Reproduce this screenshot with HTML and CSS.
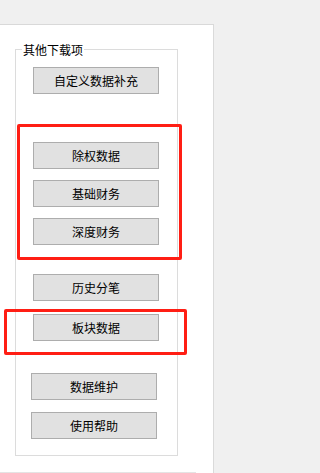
FILE: index.html
```html
<!DOCTYPE html>
<html lang="zh-CN">
<head>
<meta charset="utf-8">
<title>其他下载项</title>
<link rel="stylesheet" href="styles.css">
</head>
<body>
<div class="panel">
  <div class="group">
    <div class="legend">其他下载项</div>
    <button class="btn btn-first">自定义数据补充</button>
    <div class="mark mark-a">
      <button class="btn">除权数据</button>
      <button class="btn gap11">基础财务</button>
      <button class="btn gap11">深度财务</button>
    </div>
    <button class="btn btn-hist">历史分笔</button>
    <div class="mark mark-b">
      <button class="btn">板块数据</button>
    </div>
    <button class="btn btn-low btn-maint">数据维护</button>
    <button class="btn btn-low gap12">使用帮助</button>
  </div>
  <div class="bottom-line"></div>
</div>
</body>
</html>
```
FILE: styles.css
```css
html, body {
  margin: 0;
  padding: 0;
}
body {
  background: #f0f0f0;
  width: 217px;
  height: 473px;
  overflow: hidden;
  font-family: "Noto Sans CJK SC", "Noto Sans", sans-serif;
  font-size: 12px;
  color: #000;
}
.panel {
  margin-top: 24px;
  width: 213px;
  height: 448px;
  background: #fff;
  border-top: 1px solid #d9d9d9;
  border-right: 1px solid #dadada;
  display: flex;
  flex-direction: column;
}
.group {
  margin: 24px 0 0 15px;
  width: 161px;
  border: 1px solid #dcdcdc;
  padding-bottom: 16px;
  display: flex;
  flex-direction: column;
  align-items: flex-start;
}
.legend {
  margin: -7px 0 0 6px;
  padding: 0 1px;
  height: 14px;
  line-height: 14px;
  background: #fff;
  white-space: nowrap;
}
.btn {
  box-sizing: border-box;
  width: 126px;
  height: 27px;
  margin: 0 0 0 17px;
  padding: 0;
  border: 1px solid #adadad;
  background: #e1e1e1;
  font-family: inherit;
  font-size: 12px;
  line-height: 25px;
  color: #000;
  text-align: center;
  display: block;
}
.btn-first { margin-top: 10px; }
.gap11 { margin-top: 11px; }
.gap12 { margin-top: 12px; }
.btn-hist { margin-top: 14px; }
.btn-low { margin-left: 15px; }
.btn-maint { margin-top: 18px; }
.mark {
  box-sizing: border-box;
  border: 3px solid #ff1e14;
  border-radius: 2px;
  display: flex;
  flex-direction: column;
  align-items: flex-start;
}
.mark .btn { margin-left: 13px; }
.mark .gap11 { margin-top: 11px; }
.mark-a {
  margin: 30px 0 0 1px;
  width: 165px;
  height: 136px;
  padding-top: 15px;
}
.mark-b {
  margin: 8px 0 0 -12px;
  width: 183px;
  height: 46px;
  padding-top: 2px;
}
.mark-b .btn { margin-left: 26px; }
.bottom-line {
  margin-top: auto;
  width: 196px;
  height: 1px;
  background: #e4e4e4;
}
```
